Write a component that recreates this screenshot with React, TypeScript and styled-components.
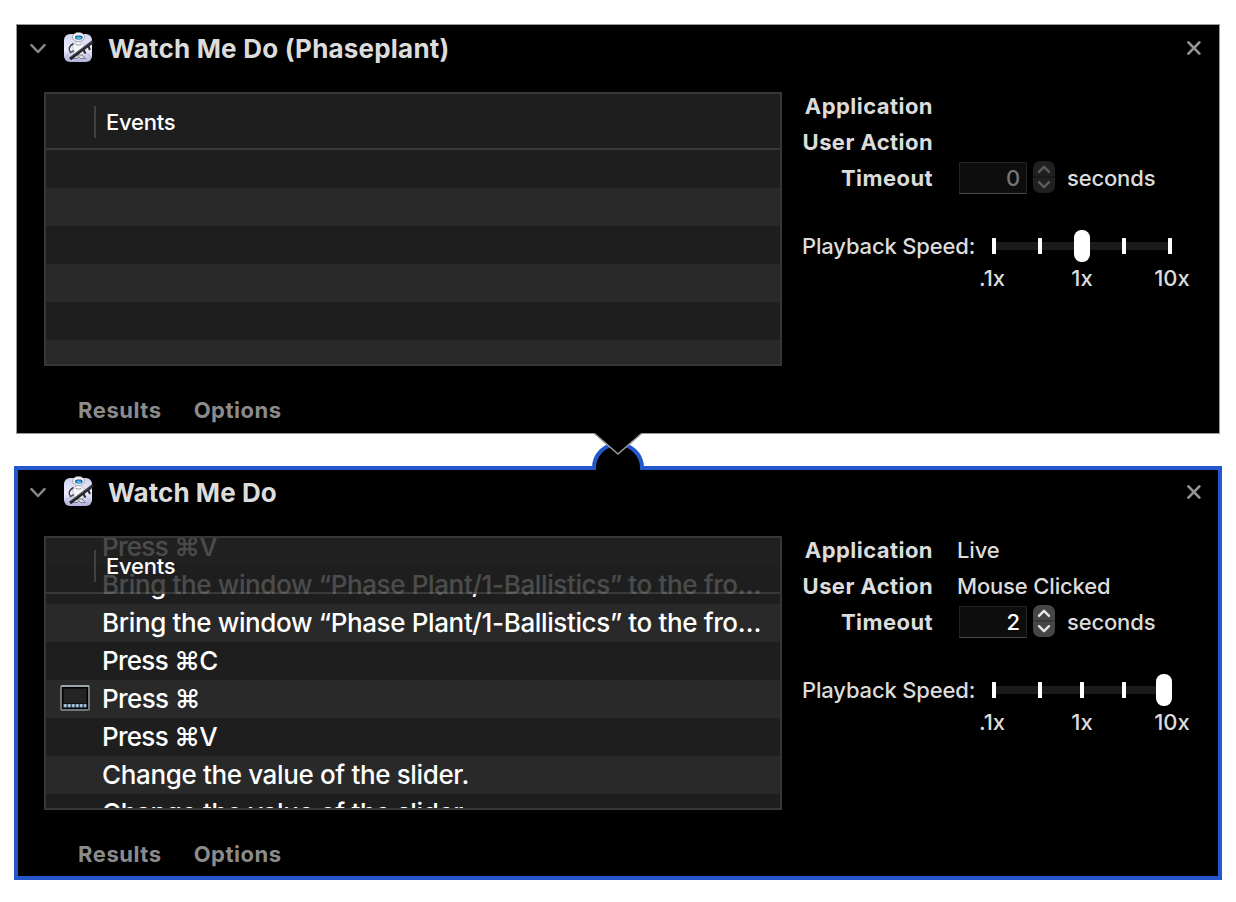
import React from "react";
import styled, { createGlobalStyle } from "styled-components";

const GlobalStyle = createGlobalStyle`
  * { box-sizing: border-box; }
  body { margin: 0; background: #fff; }
`;

const Page = styled.main`
  position: relative;
  width: 1236px;
  height: 902px;
  padding: 24px 16px;
  display: flex;
  flex-direction: column;
  gap: 34px;
  background: #fff;
  font-family: Inter, "Liberation Sans", sans-serif;
  overflow: hidden;
`;

const Panel = styled.section<{ $selected?: boolean }>`
  height: 410px;
  flex: none;
  background: #000;
  box-shadow: ${(p) =>
    p.$selected
      ? "inset 0 0 0 2px #2357cb, 0 0 0 2px #2357cb"
      : "inset 0 0 0 1px #989898"};
`;

const Text = styled.span<{ $size?: number; $weight?: number; $spacing?: number; $color?: string }>`
  font-size: ${(p) => p.$size ?? 22}px;
  font-weight: ${(p) => p.$weight ?? 450};
  letter-spacing: ${(p) => p.$spacing ?? -0.16}px;
  color: ${(p) => p.$color ?? "#dcdcdc"};
  white-space: pre;
`;

const Header = styled.header`
  height: 68px;
  padding: 8px 18px 0 14px;
  display: flex;
  align-items: flex-start;
  line-height: 33px;
`;

const Chevron = styled.svg`
  width: 16px;
  height: 32px;
  margin-right: 17px;
`;

const AppIcon = styled.svg`
  width: 32px;
  height: 32px;
  margin-right: 13px;
`;

const Close = styled.svg`
  width: 16px;
  height: 32px;
  margin-left: auto;
`;

const Body = styled.div`
  display: flex;
  height: 274px;
  padding-left: 28px;
`;

const Table = styled.div`
  position: relative;
  width: 738px;
  height: 274px;
  border: 2px solid #373737;
  background: #1e1e1e;
  overflow: hidden;
`;

const TableHead = styled.div`
  position: absolute;
  top: 0;
  left: 0;
  right: 0;
  height: 56px;
  display: flex;
  align-items: center;
  border-bottom: 2px solid rgba(255, 255, 255, 0.12);
  background: rgba(30, 30, 30, 0.8);
  line-height: 28px;
  padding-top: 1px;
`;

const ColumnRule = styled.i`
  width: 2px;
  height: 32px;
  margin: 1px 10px 0 48px;
  background: #414141;
`;

const Rows = styled.div<{ $top: number }>`
  margin-top: ${(p) => p.$top}px;
`;

const Row = styled.div<{ $light: boolean }>`
  height: 38px;
  line-height: 38px;
  display: flex;
  align-items: center;
  background: ${(p) => (p.$light ? "#292929" : "#1e1e1e")};
`;

const IconCell = styled.div`
  width: 56px;
  padding: 0 0 2px 14px;
  display: flex;
`;

const Details = styled.div`
  flex: 1;
  padding: 0 0 0 18px;
`;

const Field = styled.div`
  height: 36px;
  display: flex;
  align-items: center;
  position: relative;
  top: -4px;
`;

const Label = styled.div`
  width: 133px;
  height: 36px;
  margin-right: 24px;
  text-align: right;
  line-height: 36px;
`;

const NumberBox = styled.div`
  width: 68px;
  height: 32px;
  margin-left: 2px;
  padding-right: 6px;
  border: 1px solid #232323;
  border-bottom-color: #4a4a4a;
  background: #0d0d0d;
  text-align: right;
  line-height: 31px;
`;

const Stepper = styled.svg`
  width: 22px;
  height: 32px;
  margin: -2px 12px 0 6px;
`;

const Speed = styled.div`
  display: flex;
  align-items: center;
  height: 36px;
  margin-top: 28px;
`;

const SpeedLabel = styled.div`
  width: 190px;
  height: 36px;
  padding-left: 2px;
  line-height: 36px;
`;

const Slider = styled.svg`
  width: 188px;
  height: 36px;
`;

const Scale = styled.div`
  display: flex;
  margin-left: 147px;
  line-height: 28px;

  > * {
    width: 90px;
    text-align: center;
  }
`;

const Footer = styled.footer`
  display: flex;
  gap: 32px;
  padding: 28px 0 0 62px;
  line-height: 32px;
`;

const Connector = styled.svg`
  position: absolute;
  left: 588px;
  top: 432px;
`;

function RobotIcon() {
  return (
    <AppIcon viewBox="0 0 32 32">
      <defs>
        <linearGradient id="tile" x1="0" y1="0" x2="0" y2="1">
          <stop offset="0" stopColor="#d3d3f2" />
          <stop offset="0.55" stopColor="#ececfb" />
          <stop offset="1" stopColor="#b3b2dc" />
        </linearGradient>
      </defs>
      <rect x="1" y="2" width="28" height="28" rx="6" fill="url(#tile)" />
      <ellipse cx="15" cy="24.5" rx="12" ry="4.2" fill="none" stroke="#b9b8e2" strokeWidth="1" />
      <path d="M10.5 12c2-3 8-3 10 0l1 3-2 8h-8l-2-8z" fill="#f6f6f8" stroke="#a9a9b8" strokeWidth="0.6" />
      <path d="M10.5 11.5c-4.5 2-5.500 6.500-3 9l3.500-2" fill="none" stroke="#3c3c46" strokeWidth="1.4" />
      <path d="M12.5 12c2 1.500 4 1.500 6 0" fill="none" stroke="#888896" strokeWidth="0.9" />
      <path d="M12 23l-2.500 3.500h5l1-2 2 2h5L19 23z" fill="#dedee4" stroke="#6a6a78" strokeWidth="0.8" />
      <ellipse cx="15.5" cy="5" rx="6" ry="4.5" fill="#f5f5f5" stroke="#8b8d96" strokeWidth="0.7" />
      <rect x="12" y="3.4" width="7.6" height="4.2" rx="2.1" fill="#17588f" />
      <ellipse cx="15.8" cy="5.8" rx="2.7" ry="1.4" fill="#48b8f5" />
      <path d="M7 27L30 9.5" stroke="#24242b" strokeWidth="3.2" />
      <path d="M8 24.8L28.5 9.8" stroke="#6d6d78" strokeWidth="0.7" />
      <path d="M20 17l2.500 4.500M25 13.500l2 4.500" stroke="#292930" strokeWidth="2" />
    </AppIcon>
  );
}

function KeyboardWindow() {
  return (
    <svg width="30" height="26" viewBox="0 0 30 26">
      <rect x="1" y="1" width="28" height="24" rx="1" fill="#000" stroke="#70787c" strokeWidth="2" />
      <path d="M1 1h28" stroke="#a6b4bb" strokeWidth="1.6" />
      <rect x="3.5" y="3.5" width="23" height="15" fill="#242424" />
      <path d="M3.5 20.8h23" stroke="#86a3c0" strokeWidth="3.4" strokeDasharray="3.3 0.7" />
      <path d="M4.5 20.5h21" stroke="#d5e5f2" strokeWidth="1.6" strokeDasharray="1.5 2.5" />
    </svg>
  );
}

interface ActionProps {
  title: string;
  titleSpacing: number;
  selected?: boolean;
  rows: { text: string; spacing?: number; icon?: boolean }[];
  top: number;
  application?: string;
  userAction?: string;
  timeout: string;
  thumb: number;
}

function Action(p: ActionProps) {
  const on = !!p.selected;
  return (
    <Panel $selected={on}>
      <Header>
        <Chevron viewBox="0 0 16 32">
          <path d="M1.5 13.2L8 20l6.5-6.8" fill="none" stroke="#888" strokeWidth="2.5" strokeLinecap="round" strokeLinejoin="round" />
        </Chevron>
        <RobotIcon />
        <Text $size={26} $weight={700} $spacing={p.titleSpacing}>{p.title}</Text>
        <Close viewBox="0 0 16 32">
          <path d="M2.4 10.4l11 11.2M13.4 10.4L2.4 21.6" stroke="#949494" strokeWidth="2.7" strokeLinecap="round" />
        </Close>
      </Header>
      <Body>
        <Table>
          <Rows $top={p.top}>
            {p.rows.map((r, i) => (
              <Row key={i} $light={i % 2 === (on ? 0 : 1)}>
                <IconCell>{r.icon && <KeyboardWindow />}</IconCell>
                <Text $size={26} $spacing={r.spacing ?? -0.37} $color="#fff">{r.text}</Text>
              </Row>
            ))}
          </Rows>
          <TableHead>
            <ColumnRule />
            <Text $color="#fff" $weight={500} $spacing={-0.25}>Events</Text>
          </TableHead>
        </Table>
        <Details>
          <Field>
            <Label><Text $weight={700} $spacing={0.45}>Application</Text></Label>
            <Text>{p.application}</Text>
          </Field>
          <Field>
            <Label><Text $weight={700} $spacing={0.42}>User Action</Text></Label>
            <Text>{p.userAction}</Text>
          </Field>
          <Field>
            <Label><Text $weight={700} $spacing={0.42}>Timeout</Text></Label>
            <NumberBox>
              <Text $color={on ? "#fff" : "#777"} $weight={on ? 500 : 450}>{p.timeout}</Text>
            </NumberBox>
            <Stepper viewBox="0 0 22 32">
              <rect width="22" height="32" rx="7" fill={on ? "#464646" : "#202020"} />
              <path d="M0 16h22" stroke={on ? "#353535" : "#191919"} strokeWidth="1.5" />
              <path d="M6 10.8l5-5 5 5M6 21.2l5 5 5-5" fill="none" stroke={on ? "#e6e6e6" : "#5c5c5c"} strokeWidth="2.4" strokeLinecap="round" strokeLinejoin="round" />
            </Stepper>
            <Text>seconds</Text>
          </Field>
          <Speed>
            <SpeedLabel><Text>Playback Speed:</Text></SpeedLabel>
            <Slider viewBox="0 0 188 36">
              <rect x="2" y="14" width="180" height="8" rx="2" fill="#1b1b1b" />
              {[2, 48, 90, 132, 178].map((x) => (
                <rect key={x} x={x} y="10" width="4" height="16" rx="0.5" fill="#fff" />
              ))}
              <rect x={p.thumb} y="2" width="16" height="32" rx="7.5" fill="#fff" />
            </Slider>
          </Speed>
          <Scale>
            <Text $spacing={0}>.1x</Text>
            <Text $spacing={0}>1x</Text>
            <Text $spacing={0}>10x</Text>
          </Scale>
        </Details>
      </Body>
      <Footer>
        <Text $weight={700} $spacing={0.55} $color="#8b8b8b">Results</Text>
        <Text $weight={700} $spacing={0.5} $color="#8b8b8b">Options</Text>
      </Footer>
    </Panel>
  );
}

const emptyRows = Array.from({ length: 6 }, () => ({ text: "" }));

const events = [
  { text: "Press ⌘V", spacing: -0.72 },
  { text: "Bring the window “Phase Plant/1-Ballistics” to the fro…" },
  { text: "Bring the window “Phase Plant/1-Ballistics” to the fro…" },
  { text: "Press ⌘C", spacing: -0.72 },
  { text: "Press ⌘", spacing: -0.62, icon: true },
  { text: "Press ⌘V", spacing: -0.72 },
  { text: "Change the value of the slider.", spacing: -0.36 },
  { text: "Change the value of the slider.", spacing: -0.36 },
];

export default function App() {
  return (
    <Page>
      <GlobalStyle />
      <Action title="Watch Me Do (Phaseplant)" titleSpacing={0.2} rows={emptyRows} top={56} timeout="0" thumb={84} />
      <Action
        selected
        title="Watch Me Do"
        titleSpacing={0.06}
        rows={events}
        top={-10}
        application="Live"
        userAction="Mouse Clicked"
        timeout="2"
        thumb={166}
      />
      <Connector width="60" height="40" viewBox="588 432 60 40">
        <path d="M594 468a24 24 0 0 1 48 0" fill="#000" stroke="#2357cb" strokeWidth="4" />
        <rect x="596" y="466" width="44" height="5" fill="#000" />
        <path d="M594.5 432v1.5L618 454l23.5-20.5V432z" fill="#000" />
        <path d="M594.5 433.5L618 454l23.5-20.5" fill="none" stroke="#989898" strokeWidth="1.5" />
      </Connector>
    </Page>
  );
}
